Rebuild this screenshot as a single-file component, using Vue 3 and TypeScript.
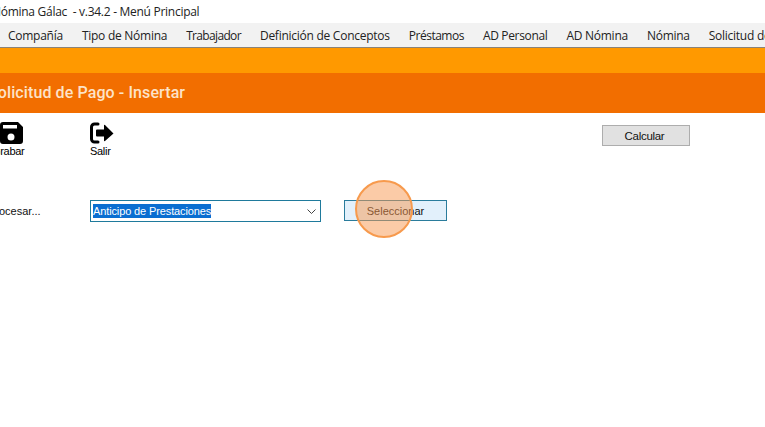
<script setup lang="ts">
const menu: { label: string; cls: string }[] = [
  { label: 'Compañía', cls: '' },
  { label: 'Tipo de Nómina', cls: '' },
  { label: 'Trabajador', cls: 'tight-lg' },
  { label: 'Definición de Conceptos', cls: '' },
  { label: 'Préstamos', cls: 'tight-md' },
  { label: 'AD Personal', cls: 'tight-sm' },
  { label: 'AD Nómina', cls: '' },
  { label: 'Nómina', cls: '' },
  { label: 'Solicitud de Pago', cls: '' },
]
</script>

<template>
  <div class="window">
    <div class="titlebar"><span>Nómina Gálac &nbsp;- v.34.2 - Menú Principal</span></div>
    <nav class="menu">
      <span v-for="m in menu" :key="m.label" class="menu-item" :class="m.cls">{{ m.label }}</span>
    </nav>
    <div class="strip"></div>
    <div class="heading"><span>Solicitud de Pago - Insertar</span></div>
    <div class="toolbar">
      <div class="tool tool-save">
        <svg width="24" height="22" viewBox="0 0 24 22">
          <path fill="#000" fill-rule="evenodd" d="M3 0h15l5 5v14a3 3 0 0 1-3 3H3a3 3 0 0 1-3-3V3a3 3 0 0 1 3-3zM3 3v3.500h14V3zM11 11.500a3.500 3.500 0 1 0 0 7 3.500 3.500 0 0 0 0-7z" />
        </svg>
        <span>Grabar</span>
      </div>
      <div class="tool tool-exit">
        <svg width="24" height="22" viewBox="0 0 24 22">
          <path fill="none" stroke="#000" stroke-width="3" stroke-linecap="round" d="M8 2H4.500A3 3 0 0 0 1.500 5v12a3 3 0 0 0 3 3H8" />
          <path fill="#000" d="M14 3.500v4H7a1 1 0 0 0-1 1v5a1 1 0 0 0 1 1h7v4q0 1 1 .5l8.500-7.500L15 3q-1-.5-1 .5z" />
        </svg>
        <span>Salir</span>
      </div>
      <button class="btn-calc">Calcular</button>
    </div>
    <div class="form">
      <span class="label">Procesar...</span>
      <div class="combo">
        <span class="combo-text">Anticipo de Prestaciones</span>
        <svg class="chev" width="9" height="5" viewBox="0 0 9 5"><path d="M.5.500l4 4 4-4" fill="none" stroke="#444" stroke-width="1" /></svg>
      </div>
      <button class="btn-select">Seleccionar</button>
    </div>
    <div class="spot"></div>
  </div>
</template>

<style>
html, body { margin: 0; background: #fff; }
</style>

<style scoped>
.window {
  position: relative;
  width: 765px;
  height: 427px;
  overflow: hidden;
  background: #fff;
  font-family: "Liberation Sans", Arial, sans-serif;
  color: #000;
}
.titlebar {
  height: 23px;
  display: flex;
  align-items: center;
  margin-left: -8px;
  white-space: nowrap;
  font: 12px/23px "Open Sans", sans-serif;
  letter-spacing: -.28px;
  color: #222;
}
.menu {
  height: 24px;
  display: flex;
  align-items: center;
  gap: 19px;
  padding-left: 8px;
  background: #f2f2f2;
  border-bottom: 1px solid #8a8378;
  white-space: nowrap;
  font: 12px "Open Sans", sans-serif;
  letter-spacing: -.26px;
  color: #222;
}
.menu-item { flex: none; }
.tight-lg { letter-spacing: -.66px; }
.tight-md { letter-spacing: -.48px; }
.tight-sm { letter-spacing: -.35px; }
.strip { height: 25px; background: #ff9900; }
.heading {
  height: 38px;
  padding-bottom: 2px;
  display: flex;
  align-items: center;
  margin-left: -12px;
  background: #f26e00;
  color: #fde3c8;
  font: 500 16px Roboto, sans-serif;
  letter-spacing: .1px;
  white-space: nowrap;
}
.toolbar {
  display: flex;
  align-items: flex-start;
  padding-top: 9px;
  height: 78px;
  box-sizing: border-box;
  margin-left: -11px;
}
.tool {
  display: flex;
  flex-direction: column;
  align-items: flex-start;
  font-size: 11px;
  line-height: 13px;
  letter-spacing: -.3px;
  gap: 1px;
  flex: none;
}
.tool-save { width: 101px; padding-left: 11px; box-sizing: border-box; }
.tool-save span { margin-left: -11px; padding-left: 3px; }
.tool-exit { width: 512px; }
.btn-calc {
  flex: none;
  width: 88px;
  height: 21px;
  margin-top: 3px;
  padding: 0 3px 0 0;
  background: #e1e1e1;
  border: 1px solid #adadad;
  font: 11.5px "Liberation Sans", Arial, sans-serif;
  color: #111;
  letter-spacing: -.3px;
}
.form {
  display: flex;
  align-items: flex-start;
  padding-top: 9px;
  margin-left: -12px;
}
.label {
  width: 102px;
  flex: none;
  font-size: 11px;
  line-height: 22px;
  color: #111;
}
.combo {
  flex: none;
  width: 231px;
  height: 22px;
  box-sizing: border-box;
  border: 1px solid #1f7a9c;
  display: flex;
  align-items: center;
  justify-content: space-between;
  padding: 0 4px 0 2px;
  margin-right: 23px;
}
.combo-text {
  background: #0a6ed1;
  color: #fff;
  font-size: 11px;
  line-height: 14px;
  letter-spacing: -.12px;
}
.btn-select {
  flex: none;
  width: 103px;
  height: 21px;
  padding: 0;
  background: #e2f0fb;
  border: 1px solid #2a7c9c;
  font: 11px "Liberation Sans", Arial, sans-serif;
  color: #111;
}
.spot {
  position: absolute;
  left: 355px;
  top: 180px;
  width: 58px;
  height: 58px;
  box-sizing: border-box;
  border-radius: 50%;
  border: 2.500px solid #f79a4d;
  background: rgba(248, 152, 80, .5);
}
</style>
